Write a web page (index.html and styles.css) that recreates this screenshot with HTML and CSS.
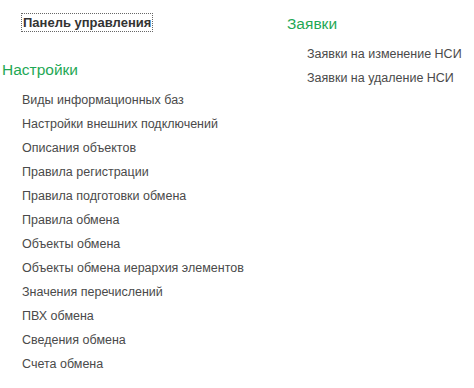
FILE: index.html
```html
<!DOCTYPE html>
<html lang="ru">

<head>
    <meta charset="UTF-8">
    <meta name="viewport" content="width=device-width, initial-scale=1.0">
    <title>Панель управления</title>
    <link rel="stylesheet" href="styles.css">
</head>

<body>
    <div class="page">
        <div class="column column-left">
            <div class="panel-row">
                <a class="panel-link" href="#">Панель управления</a>
            </div>

            <div class="group">
                <h2 class="group-title">Настройки</h2>
                <ul class="group-list">
                    <li><a href="#">Виды информационных баз</a></li>
                    <li><a href="#">Настройки внешних подключений</a></li>
                    <li><a href="#">Описания объектов</a></li>
                    <li><a href="#">Правила регистрации</a></li>
                    <li><a href="#">Правила подготовки обмена</a></li>
                    <li><a href="#">Правила обмена</a></li>
                    <li><a href="#">Объекты обмена</a></li>
                    <li><a href="#">Объекты обмена иерархия элементов</a></li>
                    <li><a href="#">Значения перечислений</a></li>
                    <li><a href="#">ПВХ обмена</a></li>
                    <li><a href="#">Сведения обмена</a></li>
                    <li><a href="#">Счета обмена</a></li>
                </ul>
            </div>
        </div>

        <div class="column column-right">
            <div class="group">
                <h2 class="group-title">Заявки</h2>
                <ul class="group-list">
                    <li><a href="#">Заявки на изменение НСИ</a></li>
                    <li><a href="#">Заявки на удаление НСИ</a></li>
                </ul>
            </div>
        </div>
    </div>
</body>

</html>
```

FILE: styles.css
```css
* {
    margin: 0;
    padding: 0;
    box-sizing: border-box;
    font-family: 'Liberation Sans', Arial, sans-serif;
}

body {
    background: #fff;
    color: #4a4a4a;
}

a {
    color: inherit;
    text-decoration: none;
}

.page {
    display: flex;
}

.column-left {
    width: 287px;
    padding-top: 13px;
    padding-left: 2px;
}

.column-right {
    padding-top: 14px;
}

.panel-row {
    padding-left: 19px;
    height: 19px;
}

.panel-link {
    display: inline-block;
    border: 1px dotted #666;
    padding: 0 1px;
    font-size: 13px;
    font-weight: bold;
    line-height: 17px;
    color: #333;
}

.column-left .group {
    margin-top: 28px;
}

.group-title {
    font-size: 15.5px;
    font-weight: normal;
    line-height: 20px;
    color: #1fa855;
}

.group-list {
    list-style: none;
    margin-top: 8px;
    padding-left: 20px;
}

.group-list li {
    font-size: 12.5px;
    line-height: 24px;
}
```
